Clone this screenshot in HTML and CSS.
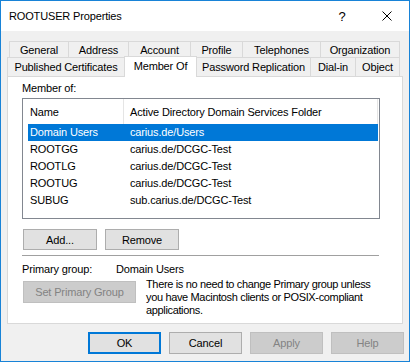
FILE: index.html
```html
<!DOCTYPE html>
<html lang="en">
<head>
  <meta charset="UTF-8">
  <title>ROOTUSER Properties</title>
  <link rel="stylesheet" href="styles.css">
</head>
<body>
  <div class="window">
    <div class="titlebar">
      <span class="title">ROOTUSER Properties</span>
      <span class="caption-btn help-btn">?</span>
      <span class="caption-btn close-btn">
        <svg width="10" height="10" viewBox="0 0 10 10"><path d="M0.5 0.5 L9.5 9.5 M9.5 0.5 L0.5 9.5" stroke="#000" stroke-width="1" fill="none"/></svg>
      </span>
    </div>

    <div class="client">
      <div class="tabs">
        <div class="tab-row row-back">
          <div class="tab t-general">General</div>
          <div class="tab t-address">Address</div>
          <div class="tab t-account">Account</div>
          <div class="tab t-profile">Profile</div>
          <div class="tab t-phones">Telephones</div>
          <div class="tab t-org">Organization</div>
        </div>
        <div class="tab-row row-front">
          <div class="tab t-certs">Published Certificates</div>
          <div class="tab t-member active">Member Of</div>
          <div class="tab t-pwrep">Password Replication</div>
          <div class="tab t-dialin">Dial-in</div>
          <div class="tab t-object">Object</div>
        </div>
      </div>

      <div class="panel">
        <div class="group-label">Member of:</div>
        <div class="listview">
          <div class="lv-header">
            <div class="col-name">Name</div>
            <div class="col-folder">Active Directory Domain Services Folder</div>
          </div>
          <div class="lv-row selected"><div class="col-name">Domain Users</div><div class="col-folder">carius.de/Users</div></div>
          <div class="lv-row"><div class="col-name">ROOTGG</div><div class="col-folder">carius.de/DCGC-Test</div></div>
          <div class="lv-row"><div class="col-name">ROOTLG</div><div class="col-folder">carius.de/DCGC-Test</div></div>
          <div class="lv-row"><div class="col-name">ROOTUG</div><div class="col-folder">carius.de/DCGC-Test</div></div>
          <div class="lv-row"><div class="col-name">SUBUG</div><div class="col-folder">sub.carius.de/DCGC-Test</div></div>
        </div>

        <div class="list-actions">
          <button class="btn">Add...</button>
          <button class="btn">Remove</button>
        </div>

        <div class="separator"></div>

        <div class="primary-row">
          <span class="primary-label">Primary group:</span>
          <span>Domain Users</span>
        </div>
        <div class="primary-set">
          <button class="btn btn-wide" disabled>Set Primary Group</button>
          <p class="note">There is no need to change Primary group unless<br>you have Macintosh clients or POSIX-compliant<br>applications.</p>
        </div>
      </div>

      <div class="dialog-buttons">
        <button class="btn btn-default">OK</button>
        <button class="btn">Cancel</button>
        <button class="btn" disabled>Apply</button>
        <button class="btn" disabled>Help</button>
      </div>
    </div>
  </div>
</body>
</html>
```

FILE: styles.css
```css
* {
  box-sizing: border-box;
}

html, body {
  margin: 0;
  background: #fff;
}

body {
  font-family: "Liberation Sans", Arial, sans-serif;
  font-size: 11px;
  letter-spacing: -0.15px;
  color: #000;
}

.window {
  width: 410px;
  height: 362px;
  border: 1px solid #1883d7;
  background: #f0f0f0;
  display: flex;
  flex-direction: column;
}

.titlebar {
  height: 30px;
  background: #fff;
  display: flex;
  align-items: center;
  padding-left: 8px;
}

.title {
  flex: 1;
}

.caption-btn {
  height: 30px;
  display: flex;
  align-items: center;
  justify-content: center;
}

.help-btn {
  width: 46px;
  font-size: 13px;
}

.close-btn {
  width: 44px;
}

/* tabs */
.tabs {
  padding-top: 10px;
}

.tab-row {
  display: flex;
}

.row-back {
  margin-left: 9px;
  height: 16px;
}

.row-front {
  margin-left: 7px;
  height: 19px;
}

.tab {
  border: 1px solid #d9d9d9;
  border-bottom: none;
  margin-left: -1px;
  text-align: center;
  white-space: nowrap;
  display: flex;
  align-items: center;
  justify-content: center;
}

.row-back .tab {
  padding-top: 1px;
}

.tab.active {
  background: #fff;
  margin-top: -1px;
  height: 21px;
  position: relative;
  z-index: 1;
  padding-bottom: 2px;
}

.t-general { width: 60px; }
.t-address { width: 61px; }
.t-account { width: 63px; }
.t-profile { width: 53px; }
.t-phones  { width: 79px; }
.t-org     { width: 80px; }

.t-certs   { width: 118px; }
.t-member  { width: 73px; }
.t-pwrep   { width: 115px; }
.t-dialin  { width: 46px; }
.t-object  { width: 45px; }

/* panel */
.panel {
  margin-left: 6px;
  width: 396px;
  height: 248px;
  border: 1px solid #d9d9d9;
  background: #fff;
  padding: 5px 0 0 14px;
}

.group-label {
  height: 13px;
  line-height: 13px;
}

.listview {
  margin-top: 3px;
  width: 358px;
  height: 121px;
  border: 1px solid #828790;
  padding: 0 1px 0 5px;
}

.lv-header {
  display: flex;
  height: 25px;
  align-items: stretch;
}

.lv-header > div {
  display: flex;
  align-items: center;
}

.lv-header .col-name {
  border-right: 1px solid #e5e5e5;
}

.lv-header .col-folder {
  flex: 1;
  border-right: 1px solid #e5e5e5;
}

.lv-row {
  display: flex;
  height: 17px;
  line-height: 17px;
}

.lv-row.selected {
  background: #0078d7;
  color: #fff;
}

.col-name {
  width: 96px;
  padding-left: 2px;
}

.col-folder {
  padding-left: 6px;
}

.list-actions {
  margin-top: 10px;
  margin-left: 1px;
  display: flex;
  gap: 8px;
}

.btn {
  font-family: inherit;
  font-size: 11px;
  letter-spacing: -0.15px;
  color: #000;
  background: #e1e1e1;
  border: 1px solid #adadad;
  width: 74px;
  height: 21px;
  padding: 0;
  margin: 0;
}

.btn:disabled {
  background: #cccccc;
  border-color: #bfbfbf;
  color: #838383;
}

.btn-wide {
  width: 113px;
  height: 22px;
}

.btn-default {
  border: 2px solid #0078d7;
}

.separator {
  margin-top: 5px;
  width: 357px;
  height: 1px;
  background: #a0a0a0;
}

.primary-row {
  margin-top: 7px;
  height: 13px;
  line-height: 13px;
  display: flex;
}

.primary-label {
  width: 94px;
}

.primary-set {
  margin-top: 5px;
  margin-left: 1px;
  display: flex;
  align-items: flex-start;
}

.note {
  margin: -3px 0 0 10px;
  line-height: 13px;
  letter-spacing: -0.35px;
  white-space: nowrap;
}

/* footer */
.dialog-buttons {
  margin-top: 8px;
  padding-right: 5px;
  display: flex;
  justify-content: flex-end;
  gap: 8px;
}

.dialog-buttons .btn {
  width: 73px;
  height: 22px;
}
```
